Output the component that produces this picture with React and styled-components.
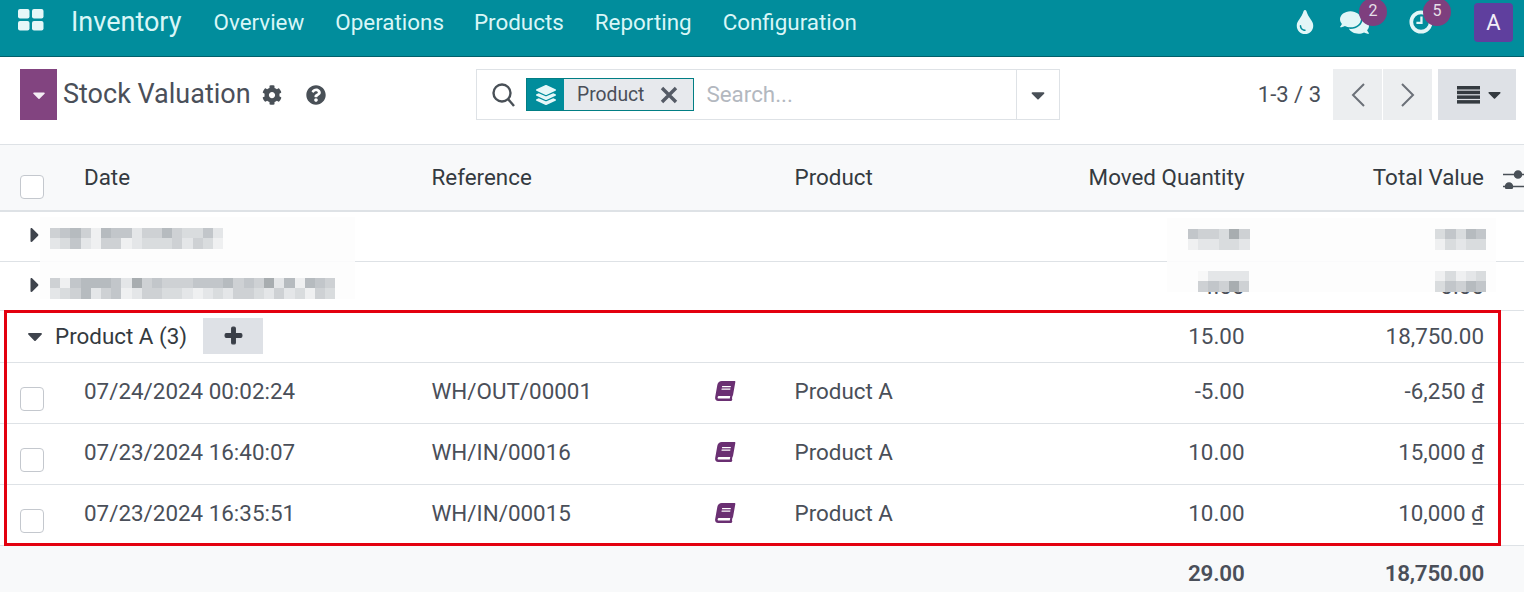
import React from 'react'
import styled, { createGlobalStyle } from 'styled-components'
import { FaBook, FaCaretDown, FaCaretRight, FaCog, FaComments, FaLayerGroup, FaPlus, FaQuestionCircle, FaTint } from 'react-icons/fa'

const GlobalStyle = createGlobalStyle`
	html, body {
		margin: 0;
		padding: 0;
		background: #fff;
		overflow: hidden;
	}
	body {
		font-family: Roboto, "Liberation Sans", sans-serif;
		font-size: 22.4px;
		color: #4a4f59;
	}
`

const Page = styled.div`
	width: 1524px;
	height: 592px;
	overflow: hidden;
`

const Navbar = styled.header`
	display: flex;
	align-items: center;
	height: 57px;
	box-sizing: border-box;
	padding: 0 0 12px 18px;
	background: #018d9c;
	border-bottom: 1px solid #01606b;
	color: #d9f6f7;
`

const AppsButton = styled.svg`
	width: 26px;
	height: 22px;
	margin-top: -4px;
	fill: #e6f7f8;
`

const Brand = styled.span`
	margin-left: 27px;
	font-size: 27px;
	color: #d9f6f7;
`

const MenuItem = styled.span`
	margin-left: ${p => p.$gap}px;
`

const Systray = styled.div`
	display: flex;
	align-items: center;
	margin-left: auto;
	padding-right: 11px;
`

const TrayIcon = styled.span`
	position: relative;
	display: flex;
	align-items: center;
	margin-right: ${p => p.$mr}px;
	font-size: ${p => p.$size}px;
	color: #e2f6f7;
`

const Badge = styled.span`
	position: absolute;
	top: ${p => p.$top}px;
	right: -18px;
	width: 28px;
	height: 28px;
	border-radius: 50%;
	background: #7e3f7e;
	color: #e6dfe8;
	font-size: 16px;
	line-height: 26px;
	text-align: center;
`

const Avatar = styled.span`
	width: 39px;
	height: 39px;
	border-radius: 4px;
	background: #5f3f9e;
	color: #f2eef8;
	font-size: 22px;
	line-height: 39px;
	text-align: center;
`

const ControlPanel = styled.div`
	display: grid;
	grid-template-columns: 456px 584px 1fr;
	align-items: start;
	height: 87px;
	box-sizing: border-box;
	padding: 12px 8px 0 20px;
`

const TitleArea = styled.div`
	display: flex;
	align-items: center;
	height: 51px;
`

const NewButton = styled.span`
	display: flex;
	align-items: center;
	justify-content: center;
	width: 37px;
	height: 51px;
	background: #824480;
	color: #f4eef4;
	font-size: 20px;
`

const Title = styled.span`
	margin: -2px 0 0 6px;
	font-size: 27px;
	color: #4a4f59;
`

const TitleIcon = styled.span`
	display: flex;
	margin-left: ${p => p.$gap}px;
	font-size: 20px;
	color: #495057;
`

const SearchBox = styled.div`
	display: flex;
	align-items: center;
	width: 584px;
	height: 51px;
	box-sizing: border-box;
	border: 1px solid #dee2e6;
`

const SearchIcon = styled.svg`
	width: 24px;
	height: 26px;
	margin-left: 14px;
	stroke: #495057;
	fill: none;
`

const Facet = styled.div`
	display: flex;
	align-items: center;
	height: 33px;
	box-sizing: border-box;
	margin-left: 11px;
	border: 1px solid #017e84;
	background: #e7e9ed;
`

const FacetIcon = styled.span`
	display: flex;
	align-items: center;
	justify-content: center;
	width: 37px;
	height: 100%;
	background: #018d9c;
	color: #e6f7f8;
	font-size: 20px;
`

const FacetLabel = styled.span`
	margin-left: 13px;
	color: #4a4f59;
	font-size: 19.3px;
`

const FacetRemove = styled.svg`
	display: block;
	width: 18px;
	height: 18px;
	margin: 0 15px 0 16px;
	stroke: #555b66;
	stroke-width: 3.4;
`

const Placeholder = styled.span`
	margin: -2px 0 0 12px;
	flex: 1;
	color: #b3b8bf;
`

const SearchToggle = styled.span`
	display: flex;
	align-items: center;
	justify-content: center;
	width: 42px;
	height: 100%;
	border-left: 1px solid #dee2e6;
	font-size: 22px;
	color: #495057;
`

const Pager = styled.div`
	display: flex;
	align-items: center;
	justify-content: flex-end;
`

const PagerText = styled.span`
	margin-right: 12px;
	font-size: 22px;
	color: #4a4f59;
`

const PagerButton = styled.span`
	display: flex;
	align-items: center;
	justify-content: center;
	width: 49px;
	height: 51px;
	margin-right: 1px;
	background: #eceef0;
`

const Chevron = styled.svg`
	width: 16px;
	height: 26px;
	fill: none;
	stroke: #6b7078;
	stroke-width: 2;
`

const ViewButton = styled.span`
	display: flex;
	align-items: center;
	gap: 4px;
	width: 78px;
	height: 51px;
	box-sizing: border-box;
	padding-left: 19px;
	margin-left: 5px;
	background: #dee1e6;
	font-size: 21px;
	color: #343a40;
`

const ListBars = styled.svg`
	width: 23px;
	height: 18px;
	fill: #343a40;
`

const Row = styled.div`
	display: grid;
	grid-template-columns: 68px 347.5px 282px 81px 241px 241px 239.5px 24px;
	align-items: center;
	height: ${p => p.$h}px;
	box-sizing: border-box;
	border-bottom: 1px solid #dee2e6;
	background: ${p => (p.$shade ? '#f8f9fa' : '#fff')};
`

const HeadRow = styled(Row)`
	border-top: 1px solid #dee2e6;
	border-bottom: 2px solid #dee2e6;
	color: #343a40;
`

const Cell = styled.div`
	padding: 0 16px;
	margin-top: ${p => p.$up || 0}px;
	white-space: nowrap;
	text-align: ${p => (p.$right ? 'right' : 'left')};
	font-weight: ${p => (p.$bold ? 600 : 400)};
	letter-spacing: ${p => (p.$bold ? '-0.2px' : 'normal')};
`

const CheckCell = styled.div`
	padding-left: 20px;
	padding-top: ${p => p.$top || 0}px;
`

const Check = styled.span`
	display: block;
	width: 24px;
	height: 24px;
	box-sizing: border-box;
	border: 1px solid #c4c8ce;
	border-radius: 4px;
	background: #fff;
`

const OptionalIcon = styled.svg`
	display: block;
	width: 24px;
	height: 22px;
	margin-left: 3px;
	stroke: #495057;
	stroke-width: 1.5;
	fill: #495057;
`

const Currency = styled.span`
	text-decoration: underline;
`

const GroupName = styled.div`
	grid-column: 1 / span 3;
	display: flex;
	align-items: center;
	padding-left: 27px;
	margin-top: ${p => p.$up || 0}px;
	color: #343a40;
`

const Caret = styled.span`
	display: flex;
	width: ${p => p.$w}px;
	margin-left: ${p => p.$ml || 0}px;
	font-size: ${p => p.$size}px;
	color: #3f444d;
`

const AddButton = styled.span`
	display: flex;
	align-items: center;
	justify-content: center;
	width: 60px;
	height: 36px;
	margin-left: 16px;
	background: #dee1e6;
	font-size: 19px;
	color: #3a3f48;

	svg {
		stroke: currentColor;
		stroke-width: 36px;
	}
`

const Book = styled(FaBook)`
	display: block;
	width: 22px;
	height: 20px;
	color: #6a2f72;
	transform: skewX(-10deg);
`

const GroupBox = styled.div`
	position: relative;
`

const RedFrame = styled.div`
	position: absolute;
	left: 4px;
	top: -1px;
	width: 1497px;
	height: 236px;
	box-sizing: border-box;
	border: 3px solid #e3000f;
	pointer-events: none;
`

const BlurBox = styled.div`
	position: relative;
`

const Halo = styled.div`
	position: absolute;
	left: ${p => p.$x}px;
	top: ${p => p.$y}px;
	width: ${p => p.$w}px;
	height: ${p => p.$h}px;
	background: rgba(253, 253, 253, 0.9);
`

const Pixels = styled.div`
	position: absolute;
	left: ${p => p.$x}px;
	top: ${p => p.$y}px;
	display: grid;
	grid-template-columns: repeat(${p => p.$cols}, ${p => p.$cell}px);
	grid-auto-rows: 10.3px;
`

const Pixel = styled.span``

const shades = {
	z: '#a8adb0', a: '#b6bbbf', b: '#c2c6ca', c: '#ced1d4', d: '#d9dcde', e: '#e4e6e8', f: '#eff0f1', g: '#f8f8f8',
}

const Blur = ({ x, y, data, cell = 10.2 }) => {
	const rows = data.split('|')
	const cols = rows[0].length
	return (
		<Pixels $x={x} $y={y} $cols={cols} $cell={cell}>
			{rows.join('').split('').map((s, i) => <Pixel key={i} style={{ background: shades[s] }} />)}
		</Pixels>
	)
}

const lines = [
	{ date: '07/24/2024 00:02:24', ref: 'WH/OUT/00001', qty: '-5.00', value: '-6,250', h: 61 },
	{ date: '07/23/2024 16:40:07', ref: 'WH/IN/00016', qty: '10.00', value: '15,000', h: 61 },
	{ date: '07/23/2024 16:35:51', ref: 'WH/IN/00015', qty: '10.00', value: '10,000', h: 61 },
]

const App = () => (
	<Page>
		<GlobalStyle />
		<Navbar>
			<AppsButton viewBox="0 0 26 22">
				<rect x="0" y="0" width="11.5" height="9.5" rx="2" />
				<rect x="14" y="0" width="11.5" height="9.5" rx="2" />
				<rect x="0" y="12" width="11.5" height="9.5" rx="2" />
				<rect x="14" y="12" width="11.5" height="9.5" rx="2" />
			</AppsButton>
			<Brand>Inventory</Brand>
			<MenuItem $gap={32}>Overview</MenuItem>
			<MenuItem $gap={31}>Operations</MenuItem>
			<MenuItem $gap={30}>Products</MenuItem>
			<MenuItem $gap={31}>Reporting</MenuItem>
			<MenuItem $gap={31}>Configuration</MenuItem>
			<Systray>
				<TrayIcon $size={24} $mr={23}><FaTint /></TrayIcon>
				<TrayIcon $size={29} $mr={40}>
					<FaComments />
					<Badge $top={-10}>2</Badge>
				</TrayIcon>
				<TrayIcon $size={24} $mr={41}>
					<svg width="24" height="24" viewBox="0 0 26 26" fill="none" stroke="currentColor">
						<circle cx="13" cy="13" r="10.5" strokeWidth="4" />
						<path d="M13.5 7v7H8" strokeWidth="2.5" />
					</svg>
					<Badge $top={-12}>5</Badge>
				</TrayIcon>
				<Avatar>A</Avatar>
			</Systray>
		</Navbar>
		<ControlPanel>
			<TitleArea>
				<NewButton><FaCaretDown /></NewButton>
				<Title>Stock Valuation</Title>
				<TitleIcon $gap={11}><FaCog /></TitleIcon>
				<TitleIcon $gap={24}><FaQuestionCircle /></TitleIcon>
			</TitleArea>
			<SearchBox>
				<SearchIcon viewBox="0 0 24 26" strokeWidth="2.4">
					<circle cx="11" cy="11" r="8.5" />
					<path d="M17 17l6 7" />
				</SearchIcon>
				<Facet>
					<FacetIcon><FaLayerGroup /></FacetIcon>
					<FacetLabel>Product</FacetLabel>
					<FacetRemove viewBox="0 0 18 18"><path d="M2 2l14 14M16 2L2 16" /></FacetRemove>
				</Facet>
				<Placeholder>Search...</Placeholder>
				<SearchToggle><FaCaretDown /></SearchToggle>
			</SearchBox>
			<Pager>
				<PagerText>1-3 / 3</PagerText>
				<PagerButton>
					<Chevron viewBox="0 0 16 26"><path d="M14 2L3 13l11 11" /></Chevron>
				</PagerButton>
				<PagerButton>
					<Chevron viewBox="0 0 16 26"><path d="M2 2l11 11L2 24" /></Chevron>
				</PagerButton>
				<ViewButton>
					<ListBars viewBox="0 0 23 18">
						<rect y="0" width="23" height="3.5" />
						<rect y="4.7" width="23" height="3.5" />
						<rect y="9.4" width="23" height="3.5" />
						<rect y="14.1" width="23" height="3.5" />
					</ListBars>
					<FaCaretDown />
				</ViewButton>
			</Pager>
		</ControlPanel>
		<HeadRow $h={68} $shade>
			<CheckCell $top={18}><Check /></CheckCell>
			<Cell $up={-2}>Date</Cell>
			<Cell $up={-2}>Reference</Cell>
			<Cell />
			<Cell $up={-2}>Product</Cell>
			<Cell $up={-2} $right>Moved Quantity</Cell>
			<Cell $up={-2} $right>Total Value</Cell>
			<OptionalIcon viewBox="0 0 24 22">
				<path d="M0 7.5h24M0 19.5h24" />
				<circle cx="15" cy="7.5" r="3.5" />
				<circle cx="6" cy="19.5" r="3.5" />
			</OptionalIcon>
		</HeadRow>
		<BlurBox>
			<Row $h={50}>
				<GroupName $up={-4}><Caret $w={24} $ml={-4} $size={24}><FaCaretRight /></Caret></GroupName>
			</Row>
			<Row $h={49}>
				<GroupName $up={-2}><Caret $w={24} $ml={-4} $size={24}><FaCaretRight /></Caret></GroupName>
				<Cell />
				<Cell />
				<Cell $right>4.00</Cell>
				<Cell $right>0.00</Cell>
			</Row>
			<Halo $x={40} $y={5} $w={315} $h={82} />
			<Halo $x={1167} $y={6} $w={329} $h={74} />
			<Blur x={50} y={16} data="cbacfabbeccacddbe|edbefccfedddcecdf" />
			<Blur x={50} y={66} data="cfbaaabezcbcccbbbacbczeafabc|edcaecbfeccddefedeccdecedfcd" />
			<Blur x={1188} y={17} cell={10.3} data="bccdzc|feedde" />
			<Blur x={1435} y={17} cell={10.3} data="dbdab|fdedd" />
			<Blur x={1198} y={59} cell={10.3} data="geeee|cbczc" />
			<Blur x={1435} y={59} cell={10.3} data="fdfed|dbcab" />
		</BlurBox>
		<GroupBox>
			<Row $h={52}>
				<GroupName $up={-2}>
					<Caret $w={32} $ml={-4} $size={24}><FaCaretDown /></Caret>
					Product A (3)
					<AddButton><FaPlus /></AddButton>
				</GroupName>
				<Cell />
				<Cell />
				<Cell $up={-2} $right>15.00</Cell>
				<Cell $up={-2} $right>18,750.00</Cell>
			</Row>
			{lines.map(line => (
				<Row $h={line.h} key={line.ref}>
					<CheckCell $top={12}><Check /></CheckCell>
					<Cell $up={-5}>{line.date}</Cell>
					<Cell $up={-5}>{line.ref}</Cell>
					<Cell $up={-5}><Book /></Cell>
					<Cell $up={-5}>Product A</Cell>
					<Cell $up={-5} $right>{line.qty}</Cell>
					<Cell $up={-5} $right>{line.value} <Currency>₫</Currency></Cell>
				</Row>
			))}
			<RedFrame />
		</GroupBox>
		<Row $h={57} $shade>
			<Cell />
			<Cell />
			<Cell />
			<Cell />
			<Cell />
			<Cell $up={-2} $right $bold>29.00</Cell>
			<Cell $up={-2} $right $bold>18,750.00</Cell>
		</Row>
	</Page>
)

export default App
